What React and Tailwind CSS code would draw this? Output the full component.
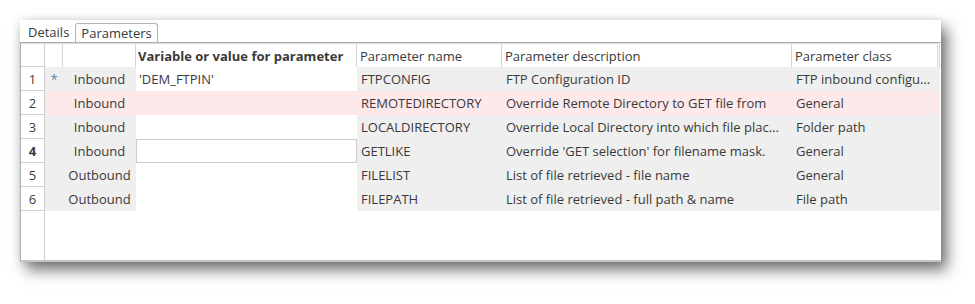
import React from 'react'

const font = { fontFamily: '"Open Sans", "Noto Sans", sans-serif' }

const rows = [
  { n: '1', star: true, dir: 'Inbound', value: "'DEM_FTPIN'", name: 'FTPCONFIG', desc: 'FTP Configuration ID', cls: 'FTP inbound configu…' },
  { n: '2', dir: 'Inbound', value: '', name: 'REMOTEDIRECTORY', desc: 'Override Remote Directory to GET file from', cls: 'General', error: true },
  { n: '3', dir: 'Inbound', value: '', name: 'LOCALDIRECTORY', desc: 'Override Local Directory into which file plac…', cls: 'Folder path' },
  { n: '4', dir: 'Inbound', value: '', name: 'GETLIKE', desc: "Override 'GET selection' for filename mask.", cls: 'General', current: true },
  { n: '5', dir: 'Outbound', value: '', name: 'FILELIST', desc: 'List of file retrieved - file name', cls: 'General' },
  { n: '6', dir: 'Outbound', value: '', name: 'FILEPATH', desc: 'List of file retrieved - full path & name', cls: 'File path' },
]

function Row({ r }) {
  const cell = r.error ? 'bg-[#fde8ea]' : 'bg-[#efefef]'
  const valueBg = r.error ? 'bg-[#fde8ea]' : 'bg-white'
  return (
    <div className="flex h-6 items-stretch">
      <div
        className={`w-6 shrink-0 border-r border-b border-[#cfcfcf] bg-white flex items-center justify-center pt-[2px] ${r.current ? 'font-bold' : ''}`}
      >
        {r.n}
      </div>
      <div className={`w-[18px] shrink-0 ${cell} flex items-center justify-center pt-[2px] text-[#5a7db0]`}>
        {r.star ? '*' : ''}
      </div>
      <div className={`w-[73px] shrink-0 ${cell} flex items-center justify-center pt-[2px]`}>{r.dir}</div>
      <div className={`w-[221px] shrink-0 ${valueBg} flex items-center`}>
        {r.current ? (
          <div className="w-full h-full border border-[#cccccc] bg-white" />
        ) : (
          <span className="pl-[3px] pt-[2px]">{r.value}</span>
        )}
      </div>
      <div className={`w-[145px] shrink-0 ${cell} flex items-center pl-1 pt-[2px]`}>{r.name}</div>
      <div className={`w-[290px] shrink-0 ${cell} flex items-center pl-1 pt-[2px] whitespace-nowrap overflow-hidden`}>{r.desc}</div>
      <div className={`flex-1 ${cell} flex items-center pl-1 pt-[2px] whitespace-nowrap overflow-hidden`}>{r.cls}</div>
    </div>
  )
}

export default function App() {
  return (
    <div className="w-[975px] h-[304px] bg-white p-5 text-[13px] text-[#3a3a3a]" style={font}>
      <div className="w-[921px] h-[242px] bg-white flex flex-col shadow-[6px_8px_14px_rgba(0,0,0,0.55),0_0_8px_rgba(0,0,0,0.1)]">
        {/* tab strip */}
        <div className="h-[22px] flex items-end pl-[2px]">
          <div className="h-[19px] px-[6px] flex items-center pt-px">Details</div>
          <div className="h-[19px] px-[5px] flex items-center pt-px border border-b-0 border-[#b4b4b4] rounded-t-[3px] bg-white">
            Parameters
          </div>
        </div>

        {/* grid */}
        <div className="flex-1 flex flex-col border-t border-l border-b-2 border-[#b0b0b0] border-b-[#c4c4c4] pr-px">
          <div className="flex h-6 border-t border-[#dcdcdc]">
            <div className="w-6 shrink-0 border-r border-b border-[#cfcfcf]" />
            <div className="w-[18px] shrink-0 border-r border-[#d6d6d6]" />
            <div className="w-[73px] shrink-0 border-r border-[#d6d6d6]" />
            <div className="w-[221px] shrink-0 border-r border-[#d6d6d6] flex items-center pl-[2px] pt-[2px] font-bold">
              Variable or value for parameter
            </div>
            <div className="w-[145px] shrink-0 border-r border-[#d6d6d6] flex items-center pl-[3px] pt-[2px]">Parameter name</div>
            <div className="w-[290px] shrink-0 border-r border-[#d6d6d6] flex items-center pl-[3px] pt-[2px]">Parameter description</div>
            <div className="w-[146px] shrink-0 border-r border-[#d6d6d6] flex items-center pl-[3px] pt-[2px]">Parameter class</div>
            <div className="flex-1 border-r border-[#d6d6d6]" />
          </div>
          {rows.map((r) => (
            <Row key={r.n} r={r} />
          ))}
          <div className="flex-1 flex">
            <div className="w-6 border-r border-[#cfcfcf]" />
          </div>
        </div>
      </div>
    </div>
  )
}
